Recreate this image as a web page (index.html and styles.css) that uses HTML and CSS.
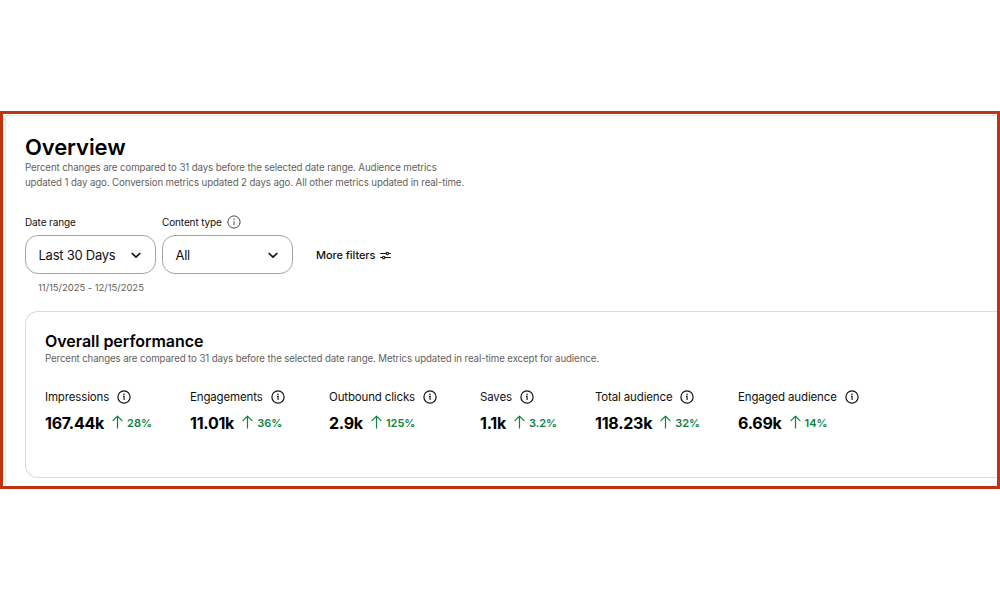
FILE: index.html
```html
<!DOCTYPE html>
<html lang="en">
<head>
    <meta charset="UTF-8">
    <meta name="viewport" content="width=device-width, initial-scale=1.0">
    <title>Overview</title>
    <link rel="stylesheet" href="styles.css">
</head>
<body>

    <!-- shared icons -->
    <svg class="sprite" width="0" height="0">
        <symbol id="info" viewBox="0 0 14 14">
            <circle cx="7" cy="7" r="6.1" fill="none" stroke="currentColor" stroke-width="1.2"/>
            <circle cx="7" cy="4.3" r="0.8" fill="currentColor"/>
            <path d="M6 6.4H7.1V10" fill="none" stroke="currentColor" stroke-width="1.1"/>
        </symbol>
        <symbol id="info-thin" viewBox="0 0 14 14">
            <circle cx="7" cy="7" r="6.1" fill="none" stroke="currentColor"/>
            <circle cx="7" cy="4.3" r="0.7" fill="currentColor"/>
            <path d="M7 6.2V10.2" fill="none" stroke="currentColor"/>
        </symbol>
        <symbol id="up" viewBox="0 0 11 14">
            <path d="M5.5 13V1.2M1 5.6L5.5 1.1L10 5.6" fill="none" stroke="currentColor" stroke-width="1.2" stroke-linecap="round" stroke-linejoin="round"/>
        </symbol>
        <symbol id="chevron" viewBox="0 0 10 7">
            <path d="M1.2 1.5L5 5.2L8.8 1.5" fill="none" stroke="currentColor" stroke-width="1.7" stroke-linecap="round" stroke-linejoin="round"/>
        </symbol>
    </svg>

    <div class="frame">
        <main class="page">
            <h1>Overview</h1>
            <p class="note">Percent changes are compared to 31 days before the selected date range. Audience metrics<br>updated 1 day ago. Conversion metrics updated 2 days ago. All other metrics updated in real-time.</p>

            <div class="filters">
                <div class="filter">
                    <div class="filter-label">Date range</div>
                    <button class="select"><span>Last 30 Days</span><svg class="chevron"><use href="#chevron"/></svg></button>
                    <div class="dates">11/15/2025 - 12/15/2025</div>
                </div>
                <div class="filter">
                    <div class="filter-label">Content type <svg class="info"><use href="#info-thin"/></svg></div>
                    <button class="select"><span>All</span><svg class="chevron"><use href="#chevron"/></svg></button>
                </div>
                <button class="more">More filters
                    <svg width="11" height="9" viewBox="0 0 11 9" fill="none" stroke="currentColor" stroke-width="1.1" stroke-linecap="round">
                        <path d="M0.6 2.5H6M8.6 2.5H10.4M0.6 6.5H2.4M5 6.5H10.4"/>
                        <circle cx="7.3" cy="2.5" r="1.2"/>
                        <circle cx="3.7" cy="6.5" r="1.2"/>
                    </svg>
                </button>
            </div>

            <section class="card">
                <h2>Overall performance</h2>
                <p class="card-note">Percent changes are compared to 31 days before the selected date range. Metrics updated in real-time except for audience.</p>

                <div class="metrics">
                    <div class="metric">
                        <div class="name"><span>Impressions</span><svg class="info"><use href="#info"/></svg></div>
                        <div class="value"><b>167.44k</b><svg class="up"><use href="#up"/></svg><span>28%</span></div>
                    </div>
                    <div class="metric">
                        <div class="name"><span>Engagements</span><svg class="info"><use href="#info"/></svg></div>
                        <div class="value"><b>11.01k</b><svg class="up"><use href="#up"/></svg><span>36%</span></div>
                    </div>
                    <div class="metric">
                        <div class="name"><span>Outbound clicks</span><svg class="info"><use href="#info"/></svg></div>
                        <div class="value"><b>2.9k</b><svg class="up"><use href="#up"/></svg><span>125%</span></div>
                    </div>
                    <div class="metric">
                        <div class="name"><span>Saves</span><svg class="info"><use href="#info"/></svg></div>
                        <div class="value"><b>1.1k</b><svg class="up"><use href="#up"/></svg><span>3.2%</span></div>
                    </div>
                    <div class="metric">
                        <div class="name"><span>Total audience</span><svg class="info"><use href="#info"/></svg></div>
                        <div class="value"><b>118.23k</b><svg class="up"><use href="#up"/></svg><span>32%</span></div>
                    </div>
                    <div class="metric">
                        <div class="name"><span>Engaged audience</span><svg class="info"><use href="#info"/></svg></div>
                        <div class="value"><b>6.69k</b><svg class="up"><use href="#up"/></svg><span>14%</span></div>
                    </div>
                </div>
            </section>
        </main>
    </div>

</body>
</html>
```
FILE: styles.css
```css
* {
    box-sizing: border-box;
}

body {
    margin: 0;
    padding-top: 111px;
    background: #fff;
    color: #111;
    font-family: Inter, "Liberation Sans", sans-serif;
}

h1, h2, p {
    margin: 0;
    white-space: nowrap;
}

button {
    font-family: inherit;
    color: inherit;
    background: none;
    border: none;
    padding: 0;
}

.sprite {
    display: block;
}

.frame {
    height: 378px;
    border: 3px solid #c03310;
    padding: 1px 0 0 2px;
    overflow: hidden;
}

.page {
    height: 371px;
    border-top: 1px solid #e5e5e0;
    border-left: 1px solid #e5e5e0;
    padding: 19px 0 0 19px;
}

h1 {
    font-size: 22px;
    line-height: 25px;
    font-weight: 600;
    letter-spacing: -0.1px;
    color: #000;
}

.note, .card-note {
    font-size: 9.7px;
    letter-spacing: -0.11px;
    color: #62625b;
}

.note {
    line-height: 15px;
}

.filters {
    display: flex;
    gap: 7px;
    margin-top: 23px;
    height: 98px;
}

.filter {
    width: 130px;
}

.filter-label {
    display: flex;
    align-items: center;
    gap: 5px;
    height: 18px;
    font-size: 10px;
    letter-spacing: -0.12px;
    white-space: nowrap;
}

.select {
    display: flex;
    align-items: center;
    justify-content: space-between;
    width: 131px;
    height: 39px;
    margin-top: 4px;
    padding: 0 14px 0 12.5px;
    border: 1px solid #a5a5a0;
    border-radius: 13px;
    font-size: 13px;
    letter-spacing: -0.25px;
}

.dates {
    margin: 7px 0 0 13px;
    font-size: 9.5px;
    line-height: 13px;
    letter-spacing: -0.04px;
    color: #62625b;
    white-space: nowrap;
}

.more {
    display: flex;
    align-items: center;
    gap: 5px;
    height: 20px;
    margin: 32px 0 0 17px;
    font-size: 11px;
    font-weight: 500;
    letter-spacing: -0.08px;
}

.info {
    width: 14px;
    height: 14px;
}

.filter-label .info {
    color: #444;
}

.chevron {
    width: 10px;
    height: 7px;
    margin-top: 1px;
}

/* card runs off the right edge */
.card {
    height: 167px;
    border: 1px solid #dcdcd8;
    border-right: none;
    border-radius: 13px 0 0 13px;
    padding: 19px 0 0 19px;
}

h2 {
    font-size: 16px;
    line-height: 20px;
    font-weight: 600;
    letter-spacing: -0.03px;
    color: #000;
}

.card-note {
    line-height: 15px;
}

.metrics {
    display: grid;
    grid-template-columns: 145px 139px 151px 115px 143px 130px;
    margin-top: 22px;
}

.name {
    display: flex;
    align-items: center;
    gap: 8px;
    height: 18px;
    font-size: 11.5px;
    letter-spacing: -0.15px;
    white-space: nowrap;
}

.value {
    display: flex;
    align-items: center;
    height: 20px;
    margin-top: 7px;
    color: #0d8243;
    font-size: 11px;
    font-weight: 600;
}

.value b {
    color: #000;
    font-size: 16px;
    font-weight: 700;
    letter-spacing: -0.25px;
}

.up {
    width: 11px;
    height: 14px;
    margin: 0 4px 2px 8px;
}
```
